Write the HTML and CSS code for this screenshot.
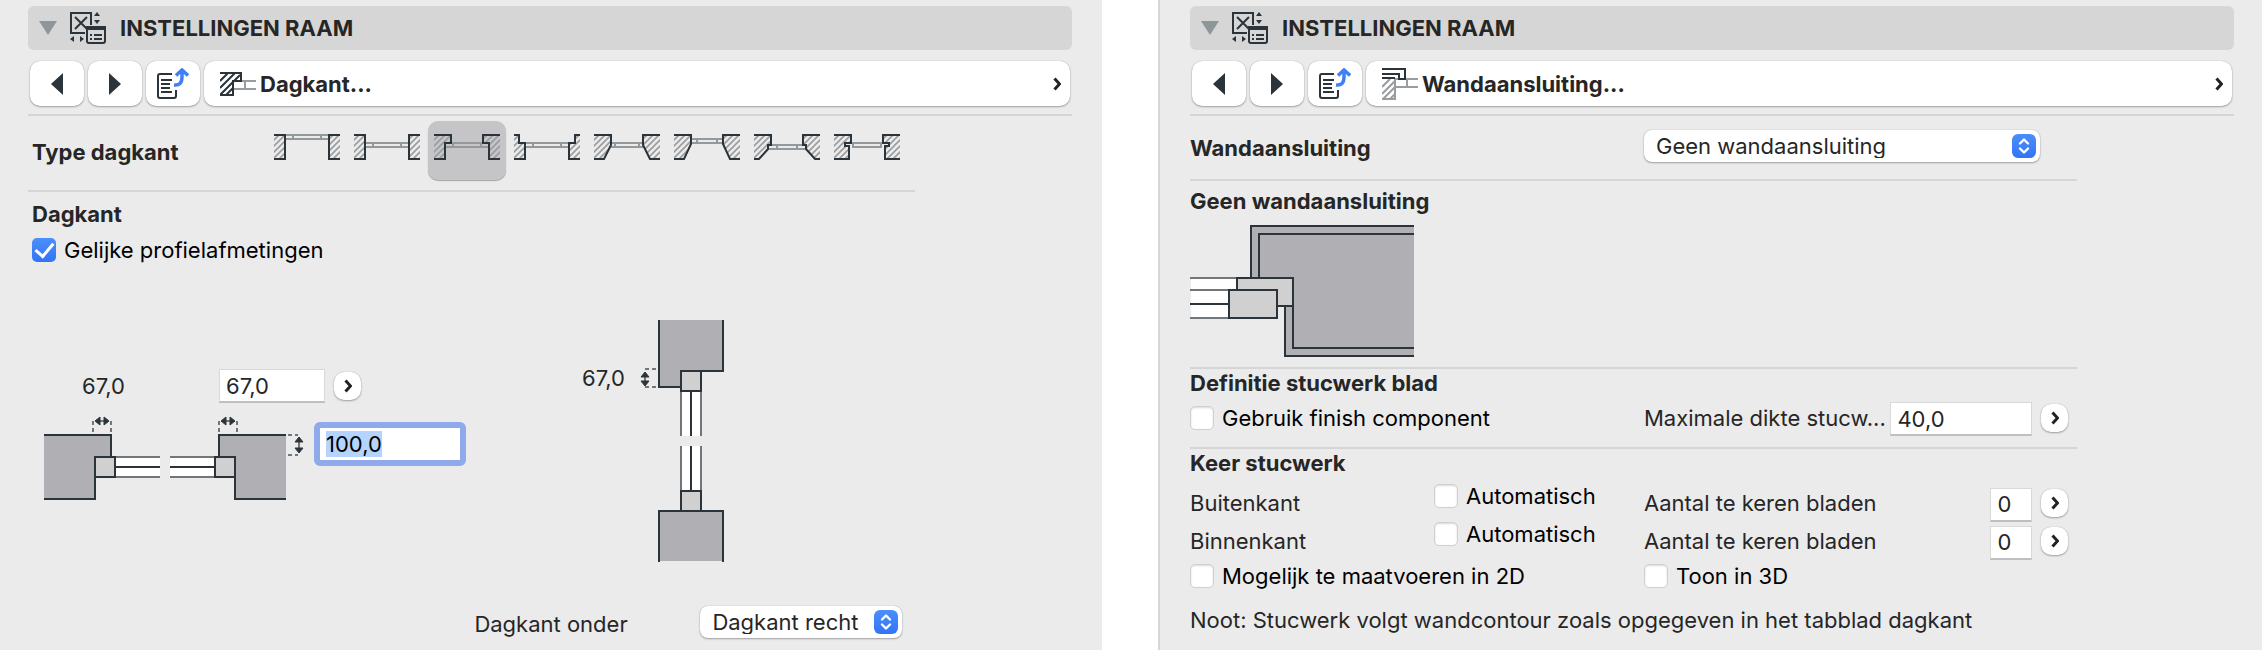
FILE: index.html
```html
<!DOCTYPE html>
<html lang="nl">
<head>
  <meta charset="utf-8">
  <title>Instellingen raam</title>
  <link rel="stylesheet" href="styles.css">
</head>
<body>
  <!-- shared icons -->
  <svg class="defs" width="0" height="0" aria-hidden="true">
    <defs>
      <pattern id="hatch" width="6" height="6" patternUnits="userSpaceOnUse">
        <path d="M-1 7L7 -1M-1 1L1 -1M5 7L7 5" stroke="#999c9f" stroke-width="1.6"/>
      </pattern>
      <symbol id="window-settings" viewBox="0 0 36 32">
        <path d="M15 21H1V1H21V13M5 5L17 17M17 5L5 17" fill="none" stroke="#2a343a" stroke-width="2"/>
        <path d="M24 4L27 0L30 4ZM24 8H30L27 12ZM4 24V30L0 27ZM10 24L14 27L10 30Z" fill="#2a343a"/>
        <rect x="17" y="15" width="18" height="16" rx="2" fill="none" stroke="#2a343a" stroke-width="2"/>
        <path d="M16 14H36V18H16ZM20 22H22V24H20ZM24 22H32V24H24ZM20 26H22V28H20ZM24 26H32V28H24Z" fill="#2a343a"/>
      </symbol>
      <symbol id="page-up" viewBox="0 0 32 31">
        <path d="M15 6H3Q1 6 1 8V28Q1 30 3 30H17Q19 30 19 28V22" fill="none" stroke="#2a343a" stroke-width="2"/>
        <path d="M4 12H15M4 16H13M4 20H13M4 24H15" stroke="#2a343a" stroke-width="2"/>
        <path d="M17 17Q25 18 25 9V3M19 7.500L25 2L31 7.500" fill="none" stroke="#417ff8" stroke-width="3.500"/>
      </symbol>
      <symbol id="chevron" viewBox="0 0 8 14">
        <path d="M1.500 1.500L6.500 7L1.500 12.500" fill="none" stroke="#222" stroke-width="3"/>
      </symbol>
      <symbol id="updown" viewBox="0 0 24 24">
        <path d="M8 9.500L12 5.500L16 9.500M8 14.500L12 18.500L16 14.500" fill="none" stroke="#fff" stroke-width="2.400" stroke-linecap="round" stroke-linejoin="round"/>
      </symbol>
    </defs>
  </svg>

  <section class="panel">
    <header class="title-bar">
      <svg class="disclosure" width="18" height="14"><path d="M0 0H18L9 14Z"/></svg>
      <svg width="36" height="32"><use href="#window-settings"/></svg>
      <h1>INSTELLINGEN RAAM</h1>
    </header>

    <nav class="toolbar">
      <button class="tool" aria-label="Vorige"><svg width="12" height="22"><path d="M12 0V22L0 11Z" fill="#2a343a"/></svg></button>
      <button class="tool" aria-label="Volgende"><svg width="12" height="22"><path d="M0 0V22L12 11Z" fill="#2a343a"/></svg></button>
      <button class="tool" aria-label="Overzicht"><svg width="32" height="31"><use href="#page-up"/></svg></button>
      <button class="tool page">
        <svg width="36" height="24" fill="none" stroke="#2a343a" stroke-width="2">
          <path d="M13 9H36M13 17H36M25 9V17" stroke="#999da0"/>
          <path d="M0 1H21V9H13V23H0" fill="#fff"/>
          <path d="M0 9L8 1M0 16L15 1M0 23L20 3M6 23L13 16"/>
        </svg>
        <span>Dagkant...</span>
        <svg class="go" width="8" height="14"><use href="#chevron"/></svg>
      </button>
    </nav>

    <div class="section types">
      <h2>Type dagkant</h2>
      <div class="type-list">
        <button class="type" aria-label="Type 1"><svg class="jamb" width="66" height="26">
          <path class="sash" d="M11 1H55M11 5H55M19 1V5M47 1V5"/>
          <path class="wall" d="M0 1H11V25H0M66 1H55V25H66"/></svg></button>
        <button class="type" aria-label="Type 2"><svg class="jamb" width="66" height="26">
          <path class="sash" d="M11 9H55M11 13H55M19 9V13M47 9V13"/>
          <path class="wall" d="M0 1H11V25H0M66 1H55V25H66"/></svg></button>
        <button class="type" aria-label="Type 3" aria-pressed="true"><svg class="jamb" width="66" height="26">
          <path class="sash" d="M11 9H55M11 13H55M19 9V13M47 9V13"/>
          <path class="wall" d="M0 1H17V9H11V25H0M66 1H49V9H55V25H66"/></svg></button>
        <button class="type" aria-label="Type 4"><svg class="jamb" width="66" height="26">
          <path class="sash" d="M11 9H55M11 13H55M19 9V13M47 9V13"/>
          <path class="wall" d="M0 1H5V9H11V25H0M66 1H61V9H55V25H66"/></svg></button>
        <button class="type" aria-label="Type 5"><svg class="jamb" width="66" height="26">
          <path class="sash" d="M17 9H49M17 13H49M21 9V13M45 9V13"/>
          <path class="wall" d="M0 1H17V11L10 25H0M66 1H49V11L56 25H66"/></svg></button>
        <button class="type" aria-label="Type 6"><svg class="jamb" width="66" height="26">
          <path class="sash" d="M17 5H49M17 9H49M23 5V9M43 5V9"/>
          <path class="wall" d="M0 1H17V10L10 25H0M66 1H49V10L56 25H66"/></svg></button>
        <button class="type" aria-label="Type 7"><svg class="jamb" width="66" height="26">
          <path class="sash" d="M14 11H52M14 15H52M23 11V15M43 11V15"/>
          <path class="wall" d="M0 1H17V11H14V15L5 25H0M66 1H49V11H52V15L61 25H66"/></svg></button>
        <button class="type" aria-label="Type 8"><svg class="jamb" width="66" height="26">
          <path class="sash" d="M18 9H48M18 13H48M19 9V13M47 9V13"/>
          <path class="wall" d="M0 1H17V9H11V12H15V25H0M66 1H49V9H55V12H51V25H66"/></svg></button>
      </div>
    </div>

    <div class="section reveal">
      <h2>Dagkant</h2>
      <label class="check"><input type="checkbox" checked>Gelijke profielafmetingen</label>

      <div class="drawings">
        <div class="plan">
          <div class="plan-sizes">
            <span class="mirror">67,0</span>
            <input class="field medium" type="text" value="67,0" aria-label="Breedte">
            <button class="more" aria-label="Meer"><svg width="8" height="14"><use href="#chevron"/></svg></button>
          </div>
          <div class="plan-row">
            <svg class="detail" width="262" height="84">
              <path class="mass" d="M0 19H67V41H51V83H0ZM242 19H175V41H191V83H242Z"/>
              <path class="glass" d="M71 41H116V61H71ZM126 41H171V61H126Z"/>
              <path class="edge" d="M71 41H116M71 61H116M126 41H171M126 61H171"/>
              <path class="line" d="M0 19H67V41M51 61V83H0M242 19H175V41M191 61V83H242M71 51H116M126 51H171"/>
              <path class="frame" d="M51 41H71V61H51ZM171 41H191V61H171Z"/>
              <path class="dash" d="M49 16V6H52M67 16V6H64M175 16V6H178M193 16V6H190M244 19H254M244 39H254"/>
              <path class="edge" d="M54 5H62M180 5H188M255 24V34"/>
              <path class="arrow" d="M56 1V9L51 5ZM60 1V9L65 5ZM182 1V9L177 5ZM186 1V9L191 5ZM251 26H259L255 21ZM251 32H259L255 37Z"/>
            </svg>
            <input id="depth" class="field active" type="text" value="100,0" aria-label="Diepte">
          </div>
        </div>

        <div class="cross">
          <span>67,0</span>
          <svg class="detail" width="84" height="242">
            <path class="mass" d="M19 0V67H41V51H83V0ZM19 241V191H83V241Z"/>
            <path class="glass" d="M41 71H61V116H41ZM41 126H61V171H41Z"/>
            <path class="edge" d="M41 71V116M61 71V116M41 126V171M61 126V171"/>
            <path class="line" d="M19 0V67H41M61 51H83V0M19 242V191H83V242M51 71V116M51 126V171"/>
            <path class="frame" d="M41 51H61V71H41ZM41 171H61V191H41Z"/>
            <path class="dash" d="M16 49H6V52M16 67H6V64"/>
            <path class="edge" d="M5 54V63"/>
            <path class="arrow" d="M1 57H9L5 52ZM1 61H9L5 66Z"/>
          </svg>
        </div>
      </div>

      <div class="bottom-row">
        <label for="sill">Dagkant onder</label>
        <div class="dropdown narrow">
          <select id="sill"><option>Dagkant recht</option></select>
          <svg class="knob" width="24" height="24"><use href="#updown"/></svg>
        </div>
      </div>
    </div>
  </section>

  <section class="panel right">
    <header class="title-bar">
      <svg class="disclosure" width="18" height="14"><path d="M0 0H18L9 14Z"/></svg>
      <svg width="36" height="32"><use href="#window-settings"/></svg>
      <h1>INSTELLINGEN RAAM</h1>
    </header>

    <nav class="toolbar">
      <button class="tool" aria-label="Vorige"><svg width="12" height="22"><path d="M12 0V22L0 11Z" fill="#2a343a"/></svg></button>
      <button class="tool" aria-label="Volgende"><svg width="12" height="22"><path d="M0 0V22L12 11Z" fill="#2a343a"/></svg></button>
      <button class="tool" aria-label="Overzicht"><svg width="32" height="31"><use href="#page-up"/></svg></button>
      <button class="tool page">
        <svg width="36" height="32" fill="none" stroke="#2a343a" stroke-width="2">
          <path d="M13 11H36M13 19H36M25 11V19M13 11V31H0M0 19L8 11M0 26L13 13M1 31L13 19M8 31L13 26" stroke="#999da0"/>
          <path d="M0 1H23V11H17V6H0M0 10H13"/>
        </svg>
        <span>Wandaansluiting...</span>
        <svg class="go" width="8" height="14"><use href="#chevron"/></svg>
      </button>
    </nav>

    <div class="section cols connection">
      <h2><label for="connection">Wandaansluiting</label></h2>
      <div class="dropdown wide">
        <select id="connection"><option>Geen wandaansluiting</option></select>
        <svg class="knob" width="24" height="24"><use href="#updown"/></svg>
      </div>
    </div>

    <div class="section preview">
      <h2>Geen wandaansluiting</h2>
      <svg class="detail" width="224" height="132">
        <path class="mass" d="M61 1H224V131H95V81H61Z"/>
        <path class="glass" d="M1 53H47V93H1Z"/>
        <path class="edge" d="M0 53H47M0 65H39M0 93H39"/>
        <path class="line" d="M0 79H39M224 1H61V53M224 9H69V53M95 81V131H224M103 81V123H224"/>
        <path class="ground" d="M87 82H94V93H87Z"/>
        <path class="frame" d="M47 53H103V81H47Z"/>
        <path class="frame" d="M39 65H87V93H39Z"/>
      </svg>
    </div>

    <div class="section plaster">
      <h2>Definitie stucwerk blad</h2>
      <div class="cols finish">
        <label class="check"><input type="checkbox">Gebruik finish component</label>
        <div class="amount last">
          <label for="thickness">Maximale dikte stucw...</label>
          <input id="thickness" class="field large" type="text" value="40,0">
          <button class="more" aria-label="Meer"><svg width="8" height="14"><use href="#chevron"/></svg></button>
        </div>
      </div>
    </div>

    <div class="section plaster">
      <h2>Keer stucwerk</h2>
      <div class="cols turn first">
        <span>Buitenkant</span>
        <label class="check"><input type="checkbox">Automatisch</label>
        <div class="amount">
          <label for="outside">Aantal te keren bladen</label>
          <input id="outside" class="field small" type="text" value="0">
          <button class="more" aria-label="Meer"><svg width="8" height="14"><use href="#chevron"/></svg></button>
        </div>
      </div>
      <div class="cols turn">
        <span>Binnenkant</span>
        <label class="check"><input type="checkbox">Automatisch</label>
        <div class="amount">
          <label for="inside">Aantal te keren bladen</label>
          <input id="inside" class="field small" type="text" value="0">
          <button class="more" aria-label="Meer"><svg width="8" height="14"><use href="#chevron"/></svg></button>
        </div>
      </div>
      <div class="cols options">
        <label class="check"><input type="checkbox">Mogelijk te maatvoeren in 2D</label>
        <label class="check last"><input type="checkbox">Toon in 3D</label>
      </div>
      <p>Noot: Stucwerk volgt wandcontour zoals opgegeven in het tabblad dagkant</p>
    </div>
  </section>

  <script>
    const depth = document.getElementById('depth');
    depth.focus();
    depth.select();
  </script>
</body>
</html>
```
FILE: styles.css
```css
* { box-sizing: border-box; }
body { margin: 0; min-height: 100vh; display: flex; gap: 56px; background: #fff; color: #262626; font: 22px/24px Inter, "Liberation Sans", sans-serif; }
h1, h2, p { margin: 0; font-size: 22px; line-height: 24px; }
h1, h2 { font-weight: 700; }
button, input, select { font: inherit; color: inherit; }
button { border: none; padding: 0; }
svg { flex: none; display: block; }
.defs { position: absolute; }

.panel { flex: 1 1 0; min-width: 0; padding: 6px 30px 0 28px; background: #ebebeb; }
.panel.right { padding: 6px 28px 0 30px; border-left: 2px solid #d6d6d6; }

.title-bar { display: flex; align-items: center; height: 44px; padding-left: 11px; border-radius: 6px; background: #d6d6d6; }
.title-bar h1 { margin-left: 14px; }
.disclosure { margin-right: 13px; fill: #8f9699; }

.toolbar { display: flex; gap: 4px; padding: 11px 2px 8px; border-bottom: 2px solid #d5d5d5; }
.tool { display: flex; align-items: center; justify-content: center; width: 54px; height: 45px; border-radius: 10px; background: #fff; box-shadow: 0 0 1px rgba(0,0,0,.3), 0 1px 2px rgba(0,0,0,.3); }
.tool.page { flex: 1; justify-content: flex-start; gap: 4px; padding: 0 9px 0 16px; font-weight: 700; }
.go { margin-left: auto; }

.section { width: 85%; border-bottom: 2px solid #d5d5d5; }
.section:last-child { border-bottom: none; }
.cols { display: grid; grid-template-columns: 244px 210px minmax(0, 1fr); align-items: center; }
.check { display: flex; align-items: center; gap: 8px; color: #000; white-space: nowrap; }
.check input { appearance: none; flex: none; width: 24px; height: 24px; margin: 0; border: 1px solid #cfcfcf; border-radius: 5px; background: #fff; box-shadow: inset 0 1px 2px rgba(0,0,0,.15); }
.check input:checked { display: grid; place-items: center; border: none; background: linear-gradient(#4b8ffb, #3274f6); box-shadow: none; }
.check input:checked::after { content: ""; width: 8px; height: 15px; margin-bottom: 4px; border: solid #fff; border-width: 0 3px 3px 0; transform: rotate(40deg); }

.field { height: 34px; padding: 0 6px; border: 1px solid #d9d9d9; border-bottom: 2px solid #bfbfbf; background: #fff; outline: none; }
.field.small { width: 42px; }
.field.medium { width: 106px; }
.field.large { width: 142px; }
.field.active { width: 152px; height: 44px; border: 6px solid #8fa9eb; border-radius: 6px; color: #000; }
.field::selection { background: #b5d4fd; color: #000; }
.more { display: grid; place-items: center; flex: none; width: 27px; height: 28px; border-radius: 10px; background: #fff; box-shadow: 0 0 1px rgba(0,0,0,.3), 0 1px 2px rgba(0,0,0,.3); }

.dropdown { display: grid; align-items: center; }
.dropdown select, .dropdown .knob { grid-area: 1 / 1; }
.dropdown select { appearance: none; width: 100%; height: 32px; padding: 0 36px 0 12px; border: none; border-radius: 8px; background: #fff; box-shadow: 0 0 1px rgba(0,0,0,.3), 0 1px 2px rgba(0,0,0,.3); }
.knob { justify-self: end; margin-right: 4px; border-radius: 6px; background: linear-gradient(#4b8ffb, #3274f6); pointer-events: none; }
.narrow { width: 202px; }
.wide { grid-column: 3; width: 396px; }

/* labels sit a little under the middle of their row */
.types h2, .connection h2, .bottom-row label { padding-top: 3px; }

/* left panel */
.types { display: flex; align-items: center; padding: 5px 0 10px 4px; }
.types h2 { width: 236px; }
.type-list { display: flex; gap: 2px; }
.type { display: flex; justify-content: center; width: 78px; height: 59px; padding-top: 13px; border-radius: 10px; background: none; }
.type[aria-pressed] { background: #c5c5c7; box-shadow: 0 1px 1px rgba(0,0,0,.3); }
.jamb { fill: none; stroke-width: 2; }
.sash { stroke: #93989b; }
.wall { stroke: #2a343a; fill: url(#hatch); }

.reveal { padding: 10px 13px 0 4px; }
.reveal .check { margin-top: 12px; }
.drawings { display: flex; gap: 116px; margin-top: 58px; padding-left: 12px; }
.plan { padding-top: 49px; }
.plan-sizes { display: flex; align-items: center; gap: 9px; }
.mirror { width: 166px; padding-left: 38px; }
.plan-row { display: flex; align-items: flex-start; gap: 8px; margin-top: 13px; }
.plan-row .field { margin-top: 6px; }
.cross { display: flex; gap: 14px; }
.cross span { width: 44px; padding-top: 46px; }
.bottom-row { display: flex; align-items: center; justify-content: flex-end; margin-top: 44px; }
.bottom-row label { width: 226px; }

/* drawings */
.detail { fill: none; stroke-width: 2; }
.mass { fill: #b0afb4; }
.glass { fill: #fff; }
.ground { fill: #ebebeb; }
.edge { stroke: #727678; }
.line { stroke: #2a343a; }
.frame { fill: #d0d0d0; stroke: #2a343a; }
.dash { stroke: #727678; stroke-dasharray: 4 3; }
.arrow { fill: #2a343a; stroke: #2a343a; stroke-width: 1; stroke-linejoin: round; }

/* right panel */
.connection { padding: 14px 0 17px; }
.preview { padding: 8px 0 10px; }
.preview svg { margin-top: 12px; }
.plaster { padding-top: 2px; }
.finish { padding: 4px 0 11px; }
.finish .check { grid-column: 1 / 3; }
.last { grid-column: 3; }
.amount { display: flex; align-items: center; gap: 9px; padding-right: 9px; }
.amount label { flex: 1; min-width: 0; white-space: nowrap; }
.amount .field { margin-top: 3px; }
.turn { height: 38px; }
.turn .check { align-self: start; }
.first { margin-top: 9px; }
.options { margin-top: 4px; }
.options .check:first-child { grid-column: 1 / 3; }
.panel p { margin-top: 20px; }
```
